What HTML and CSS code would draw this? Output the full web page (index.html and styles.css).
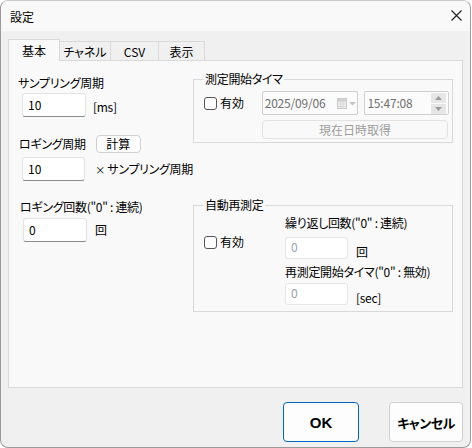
FILE: index.html
```html
<!DOCTYPE html>
<html lang="ja">
<head>
<meta charset="utf-8">
<title>設定</title>
<link rel="stylesheet" href="styles.css">
</head>
<body>
<div class="window">
  <div class="titlebar">
    <span class="title">設定</span>
    <svg class="close" width="11" height="11" viewBox="0 0 11 11"><path d="M0.5 0.5 L10.5 10.5 M10.5 0.5 L0.5 10.5" stroke="#1b1b1b" stroke-width="1.1" fill="none"/></svg>
  </div>
  <div class="content">
    <div class="tabs">
      <div class="tab active">基本</div>
      <div class="tab w-ch">チャネル</div>
      <div class="tab w-csv">CSV</div>
      <div class="tab w-disp">表示</div>
    </div>
    <div class="panel">
      <div class="col-left">
        <div class="lbl l-samp">サンプリング周期</div>
        <div class="field-row r-samp"><div class="input">10</div><span class="unit u-ms">[ms]</span></div>
        <div class="lbl-row"><span class="lbl">ロギング周期</span><span class="btn-small">計算</span></div>
        <div class="field-row r-log"><div class="input">10</div><span class="unit u-x"><span class="times">×</span> サンプリング周期</span></div>
        <div class="lbl l-cnt">ロギング回数("0" : 連続)</div>
        <div class="field-row r-cnt"><div class="input">0</div><span class="unit u-kai">回</span></div>
      </div>
      <div class="col-right">
        <fieldset class="group g1">
          <legend>測定開始タイマ</legend>
          <div class="timer-row">
            <span class="check"><span class="box"></span>有効</span>
            <div class="date">
              <span class="dtext">2025/09/06</span>
              <svg class="cal" width="20" height="11" viewBox="0 0 20 11">
                <rect x="0.5" y="0.5" width="9" height="10" fill="#f2f2f2" stroke="#c9c9c9"/>
                <path d="M1 3.5 H9.5 M1 6 H9.5 M1 8.5 H9.5 M3.5 3 V10.5 M6 3 V10.5" stroke="#d6d6d6" stroke-width="1"/>
                <rect x="0.5" y="0.5" width="9" height="2.5" fill="#d0d0d0"/>
                <path d="M12 4 L19 4 L15.5 7.5 Z" fill="#c4c4c4"/>
              </svg>
            </div>
            <div class="time">
              <span class="dtext">15:47:08</span>
              <span class="spin">
                <span class="spin-btn"><svg width="7" height="4" viewBox="0 0 7 4"><path d="M0 4 L3.5 0 L7 4 Z" fill="#9a9a9a"/></svg></span>
                <span class="spin-btn"><svg width="7" height="4" viewBox="0 0 7 4"><path d="M0 0 L3.5 4 L7 0 Z" fill="#9a9a9a"/></svg></span>
              </span>
            </div>
          </div>
          <div class="btn-now">現在日時取得</div>
        </fieldset>
        <fieldset class="group g2">
          <legend>自動再測定</legend>
          <div class="auto-grid">
            <span class="check c2"><span class="box"></span>有効</span>
            <div class="sub">
              <div class="lbl">繰り返し回数("0" : 連続)</div>
              <div class="sub-row s1"><div class="input dis">0</div><span class="unit u-low">回</span></div>
              <div class="lbl l-re">再測定開始タイマ("0" : 無効)</div>
              <div class="sub-row s2"><div class="input dis">0</div><span class="unit u-low">[sec]</span></div>
            </div>
          </div>
        </fieldset>
      </div>
    </div>
    <div class="footer">
      <span class="btn ok">OK</span>
      <span class="btn cancel">キャンセル</span>
    </div>
  </div>
</div>
</body>
</html>
```

FILE: styles.css
```css
html, body {
  margin: 0;
  padding: 0;
  background: #ffffff;
}
body {
  font-family: "Noto Sans CJK JP", "Noto Sans", sans-serif;
  font-size: 12px;
  font-feature-settings: "palt";
  color: #000;
}
.window {
  width: 471px;
  height: 448px;
  box-sizing: border-box;
  border: 1px solid #9a9a9a;
  border-top-color: #c8c8c8;
  border-radius: 8px;
  background: #f0f0f0;
  overflow: hidden;
  display: flex;
  flex-direction: column;
}
.titlebar {
  height: 30px;
  flex: none;
  background: #f9f9f9;
  display: flex;
  align-items: center;
  justify-content: space-between;
  padding: 0 8px 0 9px;
}
.title {
  line-height: 16px;
  margin-top: 1px;
}
.close {
  display: block;
  margin-top: -1px;
}
.content {
  padding: 8px 7px 0 7px;
}
.tabs {
  display: flex;
  align-items: flex-end;
  height: 21px;
}
.tab {
  box-sizing: border-box;
  height: 19px;
  border: 1px solid #d9d9d9;
  border-bottom: none;
  border-left: none;
  display: flex;
  align-items: center;
  justify-content: center;
  line-height: 16px;
  padding-top: 1px;
}
.tab.active {
  width: 52px;
  height: 22px;
  border-left: 1px solid #d9d9d9;
  background: #f9f9f9;
  margin-bottom: -1px;
  position: relative;
  z-index: 1;
  padding-top: 0;
}
.w-ch { width: 51px; }
.w-csv { width: 48px; }
.w-disp { width: 46px; }
.panel {
  box-sizing: border-box;
  height: 328px;
  border: 1px solid #d9d9d9;
  background: #f9f9f9;
  display: grid;
  grid-template-columns: 175px 260px;
  padding: 0 8px 0 9px;
  align-items: start;
}
.lbl {
  line-height: 16px;
  white-space: nowrap;
  letter-spacing: -0.3px;
}
.col-left {
  display: flex;
  flex-direction: column;
}
.l-samp { margin-top: 14px; }
.field-row {
  display: flex;
  align-items: center;
  padding-left: 4px;
}
.r-samp { margin-top: 2px; }
.input {
  box-sizing: border-box;
  width: 64px;
  height: 24px;
  background: #fff;
  border: 1px solid #e3e3e3;
  border-bottom: 1px solid #8a8a8a;
  border-radius: 3px;
  padding-left: 5px;
  line-height: 22px;
}
.unit {
  line-height: 16px;
  white-space: nowrap;
  letter-spacing: -0.3px;
}
.u-ms { margin-left: 7px; margin-top: 3px; }
.lbl-row {
  display: flex;
  align-items: center;
  margin-top: 18px;
  padding-left: 1px;
}
.btn-small {
  box-sizing: border-box;
  width: 45px;
  height: 18px;
  margin-left: 10px;
  border: 1px solid #d0d0d0;
  border-radius: 4px;
  background: #fdfdfd;
  text-align: center;
  line-height: 16px;
}
.r-log { margin-top: 4px; }
.u-x { margin-left: 10px; }
.times { font-size: 10px; }
.l-cnt { margin-top: 18px; padding-left: 2px; }
.r-cnt { margin-top: 3px; padding-left: 5px; }
.u-kai { margin-left: 8px; }

.col-right {
  display: flex;
  flex-direction: column;
}
.group {
  margin: 0;
  border: 1px solid #d9d9d9;
  min-width: 0;
}
.group legend {
  padding: 0 1px;
  line-height: 16px;
  letter-spacing: -0.3px;
}
.g1 {
  margin-top: 10px;
  padding: 4px 3px 3px 10px;
}
.timer-row {
  display: flex;
  align-items: center;
}
.check {
  display: flex;
  align-items: center;
  line-height: 16px;
}
.box {
  box-sizing: border-box;
  width: 13px;
  height: 13px;
  border: 1px solid #555;
  border-radius: 3px;
  background: #fff;
  margin-right: 3px;
}
.g1 .check { width: 58px; }
.date, .time {
  box-sizing: border-box;
  height: 24px;
  border: 1px solid #cfcfcf;
  border-radius: 2px;
  background: #fbfbfb;
  display: flex;
  align-items: center;
  color: #6f6f6f;
}
.date {
  width: 97px;
  padding-left: 2px;
}
.dtext { line-height: 16px; letter-spacing: -0.2px; }
.cal { margin-left: 12px; display: block; }
.time {
  width: 85px;
  margin-left: 6px;
  padding-left: 2px;
}
.spin {
  margin-left: auto;
  margin-right: 2px;
  display: flex;
  flex-direction: column;
  gap: 1px;
}
.spin-btn {
  width: 15px;
  height: 10px;
  background: #e6e6e6;
  display: flex;
  align-items: center;
  justify-content: center;
}
.spin-btn svg { display: block; }
.btn-now {
  box-sizing: border-box;
  margin: 5px 0 0 58px;
  width: 186px;
  height: 19px;
  border: 1px solid #e2e2e2;
  border-radius: 4px;
  background: #f9f9f9;
  color: #9d9d9d;
  text-align: center;
  line-height: 17px;
}
.g2 {
  margin-top: 54px;
  padding: 2px 3px 6px 10px;
}
.auto-grid {
  display: grid;
  grid-template-columns: 81px auto;
}
.c2 { margin-top: 19px; align-self: start; }
.sub {
  display: flex;
  flex-direction: column;
}
.sub-row {
  display: flex;
  align-items: flex-end;
}
.s1 { margin-top: 6px; }
.s2 { margin-top: 3px; }
.input.dis {
  width: 63px;
  height: 22px;
  border: 1px solid #e6e6e6;
  border-radius: 3px;
  color: #9aa3ad;
  line-height: 18px;
}
.u-low { margin-left: 8px; margin-bottom: -1px; }
.l-re { margin-top: 5px; }
.footer {
  display: flex;
  justify-content: flex-end;
  margin-top: 14px;
}
.btn {
  box-sizing: border-box;
  height: 40px;
  border-radius: 4px;
  background: #fdfdfd;
  display: flex;
  align-items: center;
  justify-content: center;
  font-weight: bold;
}
.ok {
  width: 76px;
  border: 1px solid #0067c0;
  font-family: "Liberation Sans", "Noto Sans", sans-serif;
  font-size: 15px;
}
.cancel {
  width: 74px;
  margin-left: 30px;
  border: 1px solid #d0d0d0;
  font-size: 13px;
  letter-spacing: -0.5px;
}
```
